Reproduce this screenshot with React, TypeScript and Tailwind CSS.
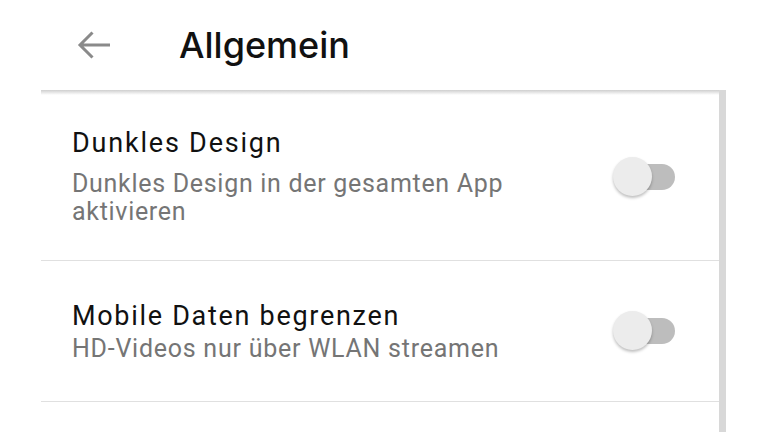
import type { FC } from "react";

const Toggle: FC<{ offset: string }> = ({ offset }) => (
  <div className={`relative w-[62px] h-[40px] shrink-0 ${offset}`}>
    <div className="absolute right-0 top-[7px] w-[40px] h-[26px] rounded-full bg-[#bdbdbd]" />
    <div className="absolute left-0 top-0 w-[39px] h-[39px] rounded-full bg-[#ececec] shadow-[0_2px_3px_rgba(0,0,0,0.25)]" />
  </div>
);

interface SettingRowProps {
  title: string;
  subtitle: string;
  row: string;
  gap: string;
  titleTracking: string;
  subTracking: string;
  toggleOffset: string;
}

const SettingRow: FC<SettingRowProps> = ({
  title,
  subtitle,
  row,
  gap,
  titleTracking,
  subTracking,
  toggleOffset,
}) => (
  <div className={`flex items-start justify-between pl-[31px] pr-[44px] border-b border-[#e0e0e0] ${row}`}>
    <div className="flex flex-col max-w-[480px]">
      <span className={`text-[27px] leading-[32px] text-[#111] ${titleTracking}`}>{title}</span>
      <span className={`text-[25px] leading-[28px] text-[#757575] ${gap} ${subTracking}`}>{subtitle}</span>
    </div>
    <Toggle offset={toggleOffset} />
  </div>
);

export default function App() {
  return (
    <div
      className="w-[768px] h-[432px] bg-white overflow-hidden flex flex-col"
      style={{ fontFamily: "Roboto, 'Noto Sans', sans-serif" }}
    >
      <header className="h-[90px] shrink-0 flex items-center pl-[77px]">
        <svg width="34" height="30" viewBox="0 0 34 30" fill="none" stroke="#8a8a8a" strokeWidth="3">
          <path d="M3 15H33M15.5 2.5L3 15l12.5 12.5" />
        </svg>
        <h1
          className="ml-[68px] text-[36px] font-medium text-[#111]"
          style={{ fontFamily: "Inter, 'Open Sans', sans-serif" }}
        >
          Allgemein
        </h1>
      </header>
      <div className="flex flex-1">
        <div className="w-[41px] shrink-0" />
        <div className="relative flex-1 flex flex-col">
          <div className="absolute left-0 right-0 top-0 h-[5px] bg-gradient-to-b from-[#cfcfcf] to-white/0" />
          <SettingRow
            title="Dunkles Design"
            subtitle="Dunkles Design in der gesamten App aktivieren"
            row="h-[171px] pt-[37px]"
            gap="mt-[11px]"
            titleTracking="tracking-[1.8px]"
            subTracking="tracking-[0.7px]"
            toggleOffset="mt-[30px]"
          />
          <SettingRow
            title="Mobile Daten begrenzen"
            subtitle="HD-Videos nur über WLAN streamen"
            row="h-[141px] pt-[39px]"
            gap="mt-[3px]"
            titleTracking="tracking-[1.7px]"
            subTracking="tracking-[0.75px]"
            toggleOffset="mt-[11px]"
          />
        </div>
        <div className="w-[7px] shrink-0 bg-[#d8d8d8]" />
        <div className="w-[42px] shrink-0" />
      </div>
    </div>
  );
}
